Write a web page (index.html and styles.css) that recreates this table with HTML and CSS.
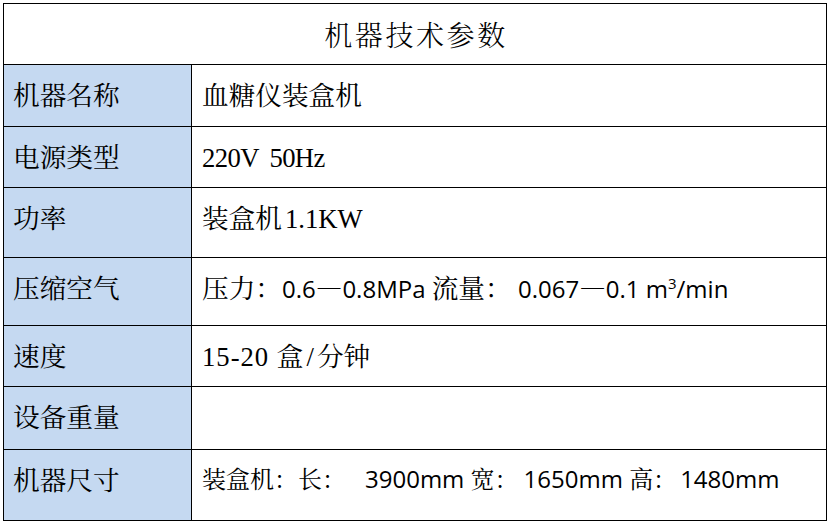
FILE: index.html
```html
<!DOCTYPE html>
<html lang="zh-CN">
<head>
<meta charset="utf-8">
<title>机器技术参数</title>
<link rel="stylesheet" href="styles.css">
</head>
<body>
<div class="sheet">
  <div class="title">机器技术参数</div>
  <div class="row r1"><div class="key">机器名称</div><div class="val">血糖仪装盒机</div></div>
  <div class="row r2"><div class="key">电源类型</div><div class="val"><span class="lat mono-ish">220V 50Hz</span></div></div>
  <div class="row r3"><div class="key">功率</div><div class="val">装盒机<span class="lat power">1.1KW</span></div></div>
  <div class="row r4"><div class="key">压缩空气</div><div class="val">压力：<span class="cal">0.6</span>—<span class="cal">0.8MPa </span>流量：<span class="cal"> 0.067</span>—<span class="cal">0.1 m<sup class="sup">3</sup>/min</span></div></div>
  <div class="row r5"><div class="key">速度</div><div class="val"><span class="lat speed">15-20 </span>盒<span class="lat slash">/</span>分钟</div></div>
  <div class="row r6"><div class="key">设备重量</div><div class="val"></div></div>
  <div class="row r7"><div class="key">机器尺寸</div><div class="val small">装盒机：长：<span class="cal gap-a">3900mm </span>宽：<span class="cal gap-b">1650mm </span>高：<span class="cal gap-c">1480mm</span></div></div>
</div>
</body>
</html>
```
FILE: styles.css
```css
html, body {
  margin: 0;
  padding: 0;
  background: #ffffff;
}

.sheet {
  margin: 3px 0 0 3px;
  width: 824px;
  box-sizing: border-box;
  border: 1px solid #000;
  font-family: "Noto Serif CJK SC", "Noto Sans CJK SC", sans-serif;
  color: #000;
}

.title {
  height: 60px;
  display: flex;
  align-items: center;
  justify-content: center;
  font-size: 28px;
  font-weight: 300;
  letter-spacing: 2.6px;
  padding-left: 2px;
  line-height: 32px;
}

.row {
  display: grid;
  grid-template-columns: 188px 1fr;
  border-top: 1px solid #000;
}

.r1 { height: 61px; }
.r2 { height: 60px; }
.r3 { height: 69px; }
.r4 { height: 67px; }
.r5 { height: 60px; }
.r6 { height: 62px; }
.r7 { height: 70px; }

.key {
  box-sizing: border-box;
  background: #c5d9f1;
  border-right: 1px solid #000;
  padding: 13px 0 0 9px;
  font-size: 26.67px;
  line-height: 32px;
}

.val {
  padding: 13px 0 0 10px;
  font-size: 26.67px;
  line-height: 32px;
  white-space: pre;
}

.val.small {
  font-size: 24px;
  padding-top: 12px;
}

.lat {
  font-family: "Liberation Serif", serif;
  font-size: 26.67px;
}

.mono-ish {
  letter-spacing: -0.6px;
  word-spacing: 5px;
}

.power {
  margin-left: 3px;
}

.speed {
  letter-spacing: 1px;
}

.slash {
  margin: 0 3px;
}

.cal {
  font-family: "Open Sans", sans-serif;
  font-size: 24px;
}

.gap-a { margin-left: 19px; }
.gap-b { margin-left: 5px; }
.gap-c { margin-left: 3px; }

.sup {
  font-size: 15px;
  line-height: 0;
  vertical-align: 9px;
}
```
